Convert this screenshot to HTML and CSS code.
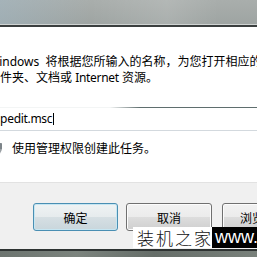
FILE: index.html
```html
<!DOCTYPE html>
<html lang="zh-CN">
<head>
<meta charset="utf-8">
<title>运行</title>
<link rel="stylesheet" href="styles.css">
</head>
<body>
<div class="window">
  <div class="glass-top"></div>
  <div class="client">
    <div class="main">
      <p class="desc"><span class="lat win">Windows</span> 将根据您所输入的名称，为您打开相应的程序、<br>文件夹、文档或 <span class="lat">Internet</span> 资源。</p>
      <div class="field"><span class="lat value">gpedit.msc</span><span class="caret"></span></div>
      <div class="admin">
        <svg class="shield" width="16" height="16" viewBox="0 0 16 16" aria-hidden="true"><path d="M8 0.5 L15 2.5 V7 C15 11 12 14 8 15.5 C4 14 1 11 1 7 V2.5 Z" fill="#9aa0a4"/><path d="M8 0.5 L15 2.5 V8 H8 Z" fill="#7d8489"/></svg>
        <span>使用管理权限创建此任务。</span>
      </div>
    </div>
    <div class="buttons">
      <button class="btn default">确定</button>
      <button class="btn cancel">取消</button>
      <button class="btn browse">浏览(<span class="ul">B</span>)...</button>
    </div>
  </div>
  <div class="glass-bottom"></div>
  <div class="watermark"><span class="wm-cn">装机之家</span><span class="wm-url">www.zhuangjizhijia.net</span></div>
</div>
</body>
</html>
```

FILE: styles.css
```css
html, body {
  margin: 0;
  padding: 0;
}
body {
  width: 257px;
  height: 257px;
  overflow: hidden;
  background: #6f7772;
  font-family: "Noto Sans", "Noto Sans CJK SC", sans-serif;
  font-size: 12px;
  color: #000;
}
.window {
  position: relative;
  width: 257px;
  height: 257px;
  overflow: hidden;
}
.glass-top {
  height: 25px;
  border-bottom: 2px solid #3b3f3f;
  background:
    linear-gradient(#d0d4d3, #d0d4d3) left bottom / 100% 1px no-repeat,
    linear-gradient(to right, rgba(160, 185, 200, 0.45), rgba(160, 185, 200, 0) 35%, rgba(255, 255, 255, 0.12) 65%, rgba(255, 255, 255, 0) 85%),
    linear-gradient(to bottom, #a9aeac, #9ea4a2);
}
.client {
  background: #f0f0f0;
}
.main {
  background: #fff;
  padding: 27px 0 25px;
}
.desc {
  margin: 0 0 0 -12px;
  line-height: 16px;
  white-space: nowrap;
}
.lat {
  letter-spacing: -0.3px;
}
.lat.win {
  letter-spacing: 0;
  margin-right: 3px;
}
.field {
  margin: 21px 0 0 -30px;
  width: 420px;
  height: 22px;
  padding-top: 1px;
  border-bottom: 1px solid #d3d9de;
  background:
    linear-gradient(to right, #f3f5f5 0, #f3f5f5 140px, #5f6e6e 170px) left top / 100% 1px no-repeat,
    #fff;
  display: flex;
  align-items: center;
  padding-left: 23px;
  box-sizing: content-box;
  line-height: 22px;
}
.caret {
  display: inline-block;
  width: 1px;
  height: 12px;
  background: #000;
  margin-left: 1px;
}
.admin {
  margin-top: 10px;
  height: 16px;
  line-height: 16px;
  display: flex;
  align-items: center;
  gap: 9px;
  white-space: nowrap;
}
.shield {
  margin-left: -13px;
  flex: none;
}
.buttons {
  border-top: 1px solid #e2e2e2;
  padding: 20px 0 18px 33px;
  display: flex;
  gap: 8px;
  white-space: nowrap;
}
.btn {
  flex: none;
  width: 86px;
  height: 28px;
  padding: 0;
  border: 1px solid #707070;
  border-radius: 3px;
  font-family: "Noto Sans CJK SC", "Noto Sans", sans-serif;
  font-size: 12px;
  color: #000;
  box-shadow: inset 0 0 0 1px #fcfcfc;
  background: linear-gradient(to bottom, #f2f2f2 0%, #ebebeb 50%, #dddddd 50%, #cfcfcf 100%);
}
.btn.default {
  width: 85px;
  border-color: #4a8fb3;
  box-shadow: inset 0 0 0 1px #c6e6f2;
  background: linear-gradient(to bottom, #eff3f4 0%, #e6ebed 50%, #d6dfe3 50%, #c9d6dc 100%);
}
.btn.browse {
  margin-left: 2px;
}
.ul {
  text-decoration: underline;
}
.glass-bottom {
  height: 6px;
  border-top: 2px solid #2e3332;
  background: linear-gradient(to right, #6c746f, #7b837d 30%, #656d68 60%, #79817b);
}
.watermark {
  position: absolute;
  left: 133px;
  top: 227px;
  height: 21px;
  display: flex;
  white-space: nowrap;
}
.wm-cn {
  width: 79px;
  box-sizing: border-box;
  padding-left: 4px;
  background: #fff;
  color: #111;
  font-family: "Noto Sans CJK SC", sans-serif;
  font-weight: 300;
  font-size: 17px;
  letter-spacing: 2px;
  line-height: 21px;
}
.wm-url {
  background: #000;
  color: #fff;
  padding-left: 3px;
  font-family: "Liberation Sans", sans-serif;
  font-size: 18px;
  line-height: 21px;
  width: 120px;
}
```
